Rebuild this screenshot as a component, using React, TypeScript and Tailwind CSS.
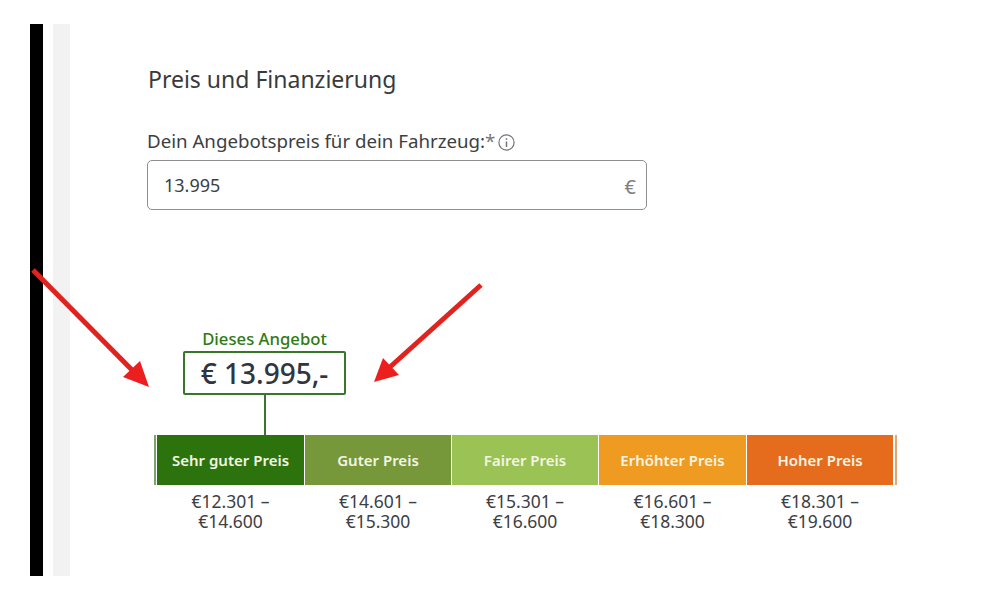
const font = "font-['Noto_Sans','Liberation_Sans',sans-serif]"

const segments = [
  { label: 'Sehr guter Preis', from: '€12.301 –', to: '€14.600', bg: 'bg-[#2d730d]', w: 'w-[147px]' },
  { label: 'Guter Preis', from: '€14.601 –', to: '€15.300', bg: 'bg-[#76983a]', w: 'w-[146px]' },
  { label: 'Fairer Preis', from: '€15.301 –', to: '€16.600', bg: 'bg-[#9bc254]', w: 'w-[146px]' },
  { label: 'Erhöhter Preis', from: '€16.601 –', to: '€18.300', bg: 'bg-[#ef9b22]', w: 'w-[147px]' },
  { label: 'Hoher Preis', from: '€18.301 –', to: '€19.600', bg: 'bg-[#e56c1c]', w: 'w-[146px]' },
]

// red annotation arrows lying over the page
const Arrows = () => (
  <svg className="absolute left-0 top-0 pointer-events-none" width="1000" height="600" viewBox="0 0 1000 600">
    <line x1="33" y1="270" x2="132" y2="370" stroke="#e0231f" strokeWidth="5" />
    <polygon points="149,387 123,377 140,361" fill="#ec1f1f" />
    <line x1="481" y1="285" x2="390" y2="367" stroke="#e0231f" strokeWidth="5" />
    <polygon points="374,382 383,358 399,375" fill="#ec1f1f" />
  </svg>
)

const InfoIcon = () => (
  <svg width="17" height="17" viewBox="0 0 17 17" fill="none" stroke="#707478" strokeWidth="1.2">
    <circle cx="8.5" cy="8.5" r="7.6" />
    <line x1="8.5" y1="7.5" x2="8.5" y2="13" strokeWidth="1.5" />
    <line x1="8.5" y1="4.2" x2="8.5" y2="5.8" strokeWidth="1.5" />
  </svg>
)

export default function App() {
  return (
    <div className={`relative w-[1000px] h-[600px] bg-white overflow-hidden py-[24px] pl-[30px] flex ${font}`}>
      <div className="w-[13px] bg-black" />
      <div className="w-[17px] ml-[10px] bg-[#f2f2f2]" />

      <div className="flex-1 pt-[39px] pl-[77px] flex flex-col items-start">
        <h2 className="text-[23px] leading-[32px] pl-[1px] text-[#373b3e]">Preis und Finanzierung</h2>

        <div className="mt-[33px] flex items-center h-[26px] text-[18.7px] text-[#3c4043] whitespace-nowrap">
          Dein Angebotspreis für dein Fahrzeug:
          <span className="text-[#777] self-start leading-[26px]">*</span>
          <span className="ml-[3px] mt-[3px]"><InfoIcon /></span>
        </div>

        <div className="mt-[6px] w-[500px] h-[50px] rounded-[5px] border border-[#8f8f8f] flex items-center justify-between pl-[16px] pr-[10px]">
          <span className="text-[18px] text-[#3c4043]">13.995</span>
          <span className="text-[20px] text-[#808080] mt-[3px]">€</span>
        </div>

        <div className="mt-[120px] ml-[8px] flex flex-col items-start">
          <div className="ml-[28px] w-[163px] flex flex-col items-center">
            <span className="text-[16.7px] leading-[24px] font-medium text-[#2f7a14] -mt-[3px] whitespace-nowrap">Dieses Angebot</span>
            <div className="w-[163px] h-[44px] border-2 border-[#38762a] rounded-[2px] flex items-center justify-center text-[28px] font-medium text-[#2f3640] whitespace-nowrap">
              € 13.995,-
            </div>
            <div className="w-[2px] h-[40px] bg-[#38762a]" />
          </div>

          <div className="flex -ml-[1px] h-[50px] gap-[1px]">
            <div className="w-[2px] bg-[#7fa26a]" />
            {segments.map((s) => (
              <div
                key={s.label}
                className={`${s.w} flex items-center justify-center text-[15px] font-semibold text-[#f3f5e4] whitespace-nowrap ${s.bg}`}
              >
                {s.label}
              </div>
            ))}
            <div className="w-[2px] bg-[#e0a878] ml-[1px]" />
          </div>

          <div className="flex ml-[2px] gap-[1px] mt-[6px]">
            {segments.map((s) => (
              <div key={s.label} className={`${s.w} text-center text-[17.5px] leading-[20px] text-[#3c4043]`}>
                <div>{s.from}</div>
                <div>{s.to}</div>
              </div>
            ))}
          </div>
        </div>
      </div>

      <Arrows />
    </div>
  )
}
